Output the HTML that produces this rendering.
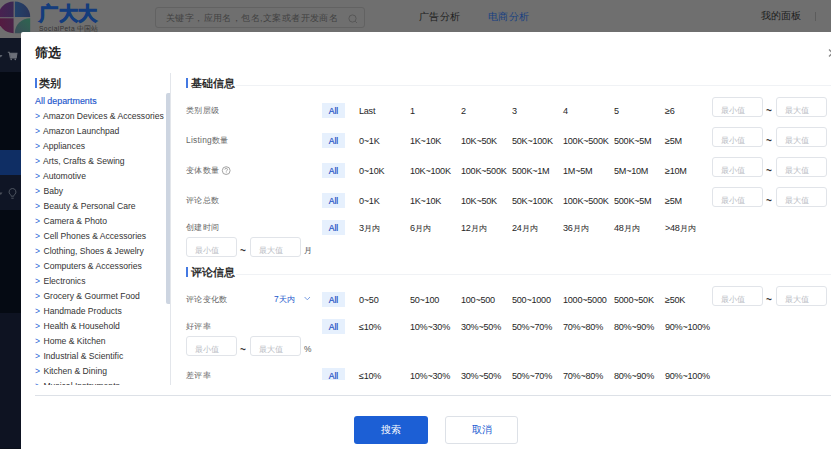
<!DOCTYPE html>
<html><head><meta charset="utf-8"><style>
*{margin:0;padding:0;box-sizing:border-box}
html,body{width:831px;height:450px;overflow:hidden;background:#fff;font-family:"Liberation Sans",sans-serif}
.a{position:absolute;white-space:nowrap}
#hdr{position:absolute;left:0;top:0;width:831px;height:38px;background:#6f6f6f}
#side{position:absolute;left:0;top:38px;width:21px;height:411px;background:#0b101b}
#modal{position:absolute;left:21px;top:32px;width:820px;height:417px;background:#fff;border-radius:2px}
.lbl{position:absolute;white-space:nowrap;font-size:8.4px;letter-spacing:0.25px;color:#666;line-height:10px}
.opt{position:absolute;white-space:nowrap;font-size:9.1px;letter-spacing:-0.25px;color:#262626;line-height:10px}
.chip{position:absolute;width:23px;height:15px;background:#e6f0fd;color:#1d4fc4;font-size:8.6px;text-align:center;line-height:16px;-webkit-text-stroke:0.2px #1d4fc4}
.inp{position:absolute;width:51px;height:20px;border:1px solid #e1e4e9;border-radius:3px;font-size:7.8px;color:#b9bcc3;text-align:left;padding:8px 0 0 8px;line-height:10px}
.sec{position:absolute;white-space:nowrap;font-size:10.6px;font-weight:400;color:#1a1a1a;-webkit-text-stroke:0.35px #1a1a1a;line-height:12px}
.bar{position:absolute;width:2px;height:10px;background:#4479e2}
.li{position:absolute;left:35px;font-size:8.6px;color:#333;white-space:nowrap;line-height:10px}
.li b{color:#2a64d6;font-weight:normal;margin-right:1px}
.hl{position:absolute;height:1px;background:#f0f2f5}
</style></head><body>
<div id="hdr"></div>
<svg class="a" style="left:0;top:0" width="32" height="34" viewBox="0 0 32 34">
<defs>
<linearGradient id="g1" x1="0" y1="0" x2="1" y2="0"><stop offset="0" stop-color="#4a2150"/><stop offset="1" stop-color="#3a2852"/></linearGradient>
<linearGradient id="g2" x1="0" y1="0" x2="1" y2="0"><stop offset="0" stop-color="#22426a"/><stop offset="1" stop-color="#28345a"/></linearGradient>
<linearGradient id="g3" x1="0" y1="0" x2="1" y2="0"><stop offset="0" stop-color="#561a40"/><stop offset="1" stop-color="#4a2348"/></linearGradient>
<linearGradient id="g4" x1="0" y1="1" x2="1" y2="0"><stop offset="0" stop-color="#3a4c58"/><stop offset="1" stop-color="#2e6650"/></linearGradient>
</defs>
<path d="M13.6 1.6A15.6 15.6 0 0 0 -2 17.2H13.6Z" fill="url(#g1)"/>
<path d="M14.8 1.6A15.4 15.4 0 0 1 30.2 17.0H14.8Z" fill="url(#g2)"/>
<path d="M13.6 18.2H-2A15.6 15.6 0 0 0 13.6 33.2Z" fill="url(#g3)"/>
<path d="M30.2 18.2V33.2H14.8A15.4 15 0 0 1 30.2 18.2Z" fill="url(#g4)"/>
</svg>
<div class="a" style="left:39px;top:3px;font-size:19px;font-weight:900;color:#143c7c;-webkit-text-stroke:1px #143c7c;line-height:22px;letter-spacing:0.6px">广大大</div>
<div class="a" style="left:39px;top:25px;font-size:6.6px;color:#333;line-height:8px;letter-spacing:0.45px">SocialPeta <span style="letter-spacing:0">中国站</span></div>
<div class="a" style="left:155px;top:7px;width:210px;height:21px;border:1px solid #626262;border-radius:3px"><span style="position:absolute;left:10px;top:4px;font-size:9px;letter-spacing:0.4px;line-height:12px;color:#424242">关键字，应用名，包名,文案或者开发商名</span><svg style="position:absolute;left:192px;top:6px" width="10" height="10" viewBox="0 0 10 10"><circle cx="4.5" cy="4.5" r="3.6" fill="none" stroke="#555" stroke-width="0.9"/><path d="M7.2 7.2L9 9" stroke="#555" stroke-width="0.9"/></svg></div>
<div class="a" style="left:419px;top:10px;font-size:10px;letter-spacing:0.35px;color:#1c1c1c;line-height:13px">广告分析</div>
<div class="a" style="left:488px;top:10px;font-size:10px;letter-spacing:0.35px;color:#173f82;line-height:13px">电商分析</div>
<div class="a" style="left:761px;top:9px;font-size:10px;color:#1c1c1c;line-height:13px">我的面板</div>
<div class="a" style="left:815px;top:12px;width:1px;height:9px;background:#5c5c5c"></div>
<div id="side"></div>
<div class="a" style="left:0;top:38px;width:21px;height:34px;background:#111726"></div>
<div class="a" style="left:0;top:72px;width:21px;height:78px;background:#050a13"></div>
<div class="a" style="left:0;top:150px;width:21px;height:25px;background:#0f2e64"></div>
<div class="a" style="left:0;top:175px;width:21px;height:35px;background:#0f1525"></div>
<div class="a" style="left:0;top:210px;width:21px;height:103px;background:#050a13"></div>
<div class="a" style="left:0;top:313px;width:21px;height:135px;background:#0e1322"></div>
<svg class="a" style="left:0;top:50px" width="21" height="12" viewBox="0 0 21 12"><path d="M-1 5H2.5L0.8 7.5Z" fill="#5c616b"/><path d="M7.8 2.2H9.2L10.4 8H16.2L16.9 3.2H9.8" fill="none" stroke="#6c7079" stroke-width="1.1"/><path d="M9.9 3.2H16.9L16.2 8H10.5Z" fill="#6c7079"/><circle cx="11.2" cy="9.3" r="0.85" fill="#6c7079"/><circle cx="15.3" cy="9.3" r="0.85" fill="#6c7079"/></svg>
<svg class="a" style="left:0;top:186px" width="21" height="16" viewBox="0 0 21 16"><path d="M-1 6.5H2.5L0.8 9Z" fill="#4a4f5a"/><path d="M12.5 2.5a3.4 3.4 0 0 0-2.1 6.1c0.5 0.5 0.8 1 0.8 1.6h2.6c0-0.6 0.3-1.1 0.8-1.6A3.4 3.4 0 0 0 12.5 2.5Z" fill="none" stroke="#555b66" stroke-width="0.9"/><path d="M11.3 12.2H13.7" stroke="#555b66" stroke-width="0.9"/></svg>
<div id="modal"></div>
<div class="a" style="left:35px;top:45px;font-size:13px;font-weight:bold;color:#222;line-height:16px">筛选</div>
<div class="bar" style="left:35px;top:78px"></div>
<div class="a" style="left:39px;top:77px;font-size:10.6px;font-weight:400;color:#1a1a1a;-webkit-text-stroke:0.35px #1a1a1a;line-height:12px">类别</div>
<div class="a" style="left:35px;top:96px;font-size:8.9px;color:#1d56cc;-webkit-text-stroke:0.15px #1d56cc;line-height:10px">All departments</div>
<div style="position:absolute;left:0;top:0;width:170px;height:385px;overflow:hidden">
<div class="li" style="top:111px"><b>&gt;</b> Amazon Devices &amp; Accessories</div>
<div class="li" style="top:126px"><b>&gt;</b> Amazon Launchpad</div>
<div class="li" style="top:141px"><b>&gt;</b> Appliances</div>
<div class="li" style="top:156px"><b>&gt;</b> Arts, Crafts &amp; Sewing</div>
<div class="li" style="top:171px"><b>&gt;</b> Automotive</div>
<div class="li" style="top:186px"><b>&gt;</b> Baby</div>
<div class="li" style="top:201px"><b>&gt;</b> Beauty &amp; Personal Care</div>
<div class="li" style="top:216px"><b>&gt;</b> Camera &amp; Photo</div>
<div class="li" style="top:231px"><b>&gt;</b> Cell Phones &amp; Accessories</div>
<div class="li" style="top:246px"><b>&gt;</b> Clothing, Shoes &amp; Jewelry</div>
<div class="li" style="top:261px"><b>&gt;</b> Computers &amp; Accessories</div>
<div class="li" style="top:276px"><b>&gt;</b> Electronics</div>
<div class="li" style="top:291px"><b>&gt;</b> Grocery &amp; Gourmet Food</div>
<div class="li" style="top:306px"><b>&gt;</b> Handmade Products</div>
<div class="li" style="top:321px"><b>&gt;</b> Health &amp; Household</div>
<div class="li" style="top:336px"><b>&gt;</b> Home &amp; Kitchen</div>
<div class="li" style="top:351px"><b>&gt;</b> Industrial &amp; Scientific</div>
<div class="li" style="top:366px"><b>&gt;</b> Kitchen &amp; Dining</div>
<div class="li" style="top:381px"><b>&gt;</b> Musical Instruments</div>
</div>
<div style="position:absolute;left:170px;top:73px;width:1px;height:312px;background:#e3e6eb"></div>
<div style="position:absolute;left:166px;top:93px;width:4px;height:211px;background:#cdd5e1;border-radius:2px 0 0 2px"></div>
<div style="position:absolute;left:175px;top:60px;width:700px;height:320px;overflow:hidden">
<div class="bar" style="left:11px;top:18px"></div>
<div class="sec" style="left:16px;top:17px">基础信息</div>
<div class="hl" style="left:61px;top:25px;width:700px"></div>
<div class="lbl" style="left:11px;top:45px;">类别层级</div>
<div class="chip" style="left:147px;top:43px;">All</div>
<div class="opt" style="left:184px;top:46px;">Last</div>
<div class="opt" style="left:235px;top:46px;">1</div>
<div class="opt" style="left:286px;top:46px;">2</div>
<div class="opt" style="left:337px;top:46px;">3</div>
<div class="opt" style="left:388px;top:46px;">4</div>
<div class="opt" style="left:439px;top:46px;">5</div>
<div class="opt" style="left:490px;top:46px;">≥6</div>
<div class="inp" style="left:537px;top:37px;">最小值</div>
<div class="a" style="left:591px;top:46px;font-size:10px;font-weight:bold;color:#333;line-height:10px">~</div>
<div class="inp" style="left:601px;top:37px;">最大值</div>
<div class="lbl" style="left:11px;top:75px;">Listing数量</div>
<div class="chip" style="left:147px;top:73px;">All</div>
<div class="opt" style="left:184px;top:76px;">0~1K</div>
<div class="opt" style="left:235px;top:76px;">1K~10K</div>
<div class="opt" style="left:286px;top:76px;">10K~50K</div>
<div class="opt" style="left:337px;top:76px;">50K~100K</div>
<div class="opt" style="left:388px;top:76px;">100K~500K</div>
<div class="opt" style="left:439px;top:76px;">500K~5M</div>
<div class="opt" style="left:490px;top:76px;">≥5M</div>
<div class="inp" style="left:537px;top:67px;">最小值</div>
<div class="a" style="left:591px;top:76px;font-size:10px;font-weight:bold;color:#333;line-height:10px">~</div>
<div class="inp" style="left:601px;top:67px;">最大值</div>
<div class="lbl" style="left:11px;top:105px;">变体数量</div>
<div class="chip" style="left:147px;top:103px;">All</div>
<div class="opt" style="left:184px;top:106px;">0~10K</div>
<div class="opt" style="left:235px;top:106px;">10K~100K</div>
<div class="opt" style="left:286px;top:106px;">100K~500K</div>
<div class="opt" style="left:337px;top:106px;">500K~1M</div>
<div class="opt" style="left:388px;top:106px;">1M~5M</div>
<div class="opt" style="left:439px;top:106px;">5M~10M</div>
<div class="opt" style="left:490px;top:106px;">≥10M</div>
<div class="inp" style="left:537px;top:97px;">最小值</div>
<div class="a" style="left:591px;top:106px;font-size:10px;font-weight:bold;color:#333;line-height:10px">~</div>
<div class="inp" style="left:601px;top:97px;">最大值</div>
<div class="a" style="left:46px;top:105px;line-height:0"><svg width="11" height="11" viewBox="0 0 11 11"><circle cx="5.2" cy="5.6" r="3.9" fill="none" stroke="#8c8c8c" stroke-width="0.8"/><path d="M3.9 4.6a1.3 1.3 0 1 1 1.9 1.1c-0.4 0.25-0.6 0.45-0.6 0.9" fill="none" stroke="#8c8c8c" stroke-width="0.75"/><circle cx="5.2" cy="7.8" r="0.45" fill="#8c8c8c"/></svg></div>
<div class="lbl" style="left:11px;top:135px;">评论总数</div>
<div class="chip" style="left:147px;top:133px;">All</div>
<div class="opt" style="left:184px;top:136px;">0~1K</div>
<div class="opt" style="left:235px;top:136px;">1K~10K</div>
<div class="opt" style="left:286px;top:136px;">10K~50K</div>
<div class="opt" style="left:337px;top:136px;">50K~100K</div>
<div class="opt" style="left:388px;top:136px;">100K~500K</div>
<div class="opt" style="left:439px;top:136px;">500K~5M</div>
<div class="opt" style="left:490px;top:136px;">≥5M</div>
<div class="inp" style="left:537px;top:127px;">最小值</div>
<div class="a" style="left:591px;top:136px;font-size:10px;font-weight:bold;color:#333;line-height:10px">~</div>
<div class="inp" style="left:601px;top:127px;">最大值</div>
<div class="lbl" style="left:11px;top:162px;">创建时间</div>
<div class="chip" style="left:147px;top:160px;">All</div>
<div class="opt" style="left:184px;top:163px;">3<span style="font-size:8.4px;letter-spacing:0.25px">月内</span></div>
<div class="opt" style="left:235px;top:163px;">6<span style="font-size:8.4px;letter-spacing:0.25px">月内</span></div>
<div class="opt" style="left:286px;top:163px;">12<span style="font-size:8.4px;letter-spacing:0.25px">月内</span></div>
<div class="opt" style="left:337px;top:163px;">24<span style="font-size:8.4px;letter-spacing:0.25px">月内</span></div>
<div class="opt" style="left:388px;top:163px;">36<span style="font-size:8.4px;letter-spacing:0.25px">月内</span></div>
<div class="opt" style="left:439px;top:163px;">48<span style="font-size:8.4px;letter-spacing:0.25px">月内</span></div>
<div class="opt" style="left:490px;top:163px;">&gt;48<span style="font-size:8.4px;letter-spacing:0.25px">月内</span></div>
<div class="inp" style="left:11px;top:177px;">最小值</div>
<div class="a" style="left:65px;top:186px;font-size:10px;font-weight:bold;color:#333;line-height:10px">~</div>
<div class="inp" style="left:75px;top:177px;">最大值</div>
<div class="a" style="left:129px;top:185px;font-size:8.4px;color:#555;line-height:10px">月</div>
<div class="bar" style="left:11px;top:207px"></div>
<div class="sec" style="left:16px;top:206px">评论信息</div>
<div class="hl" style="left:61px;top:214px;width:700px"></div>
<div class="lbl" style="left:11px;top:234px;">评论变化数</div>
<div class="chip" style="left:147px;top:232px;">All</div>
<div class="opt" style="left:184px;top:235px;">0~50</div>
<div class="opt" style="left:235px;top:235px;">50~100</div>
<div class="opt" style="left:286px;top:235px;">100~500</div>
<div class="opt" style="left:337px;top:235px;">500~1000</div>
<div class="opt" style="left:388px;top:235px;">1000~5000</div>
<div class="opt" style="left:439px;top:235px;">5000~50K</div>
<div class="opt" style="left:490px;top:235px;">≥50K</div>
<div class="inp" style="left:537px;top:226px;">最小值</div>
<div class="a" style="left:591px;top:235px;font-size:10px;font-weight:bold;color:#333;line-height:10px">~</div>
<div class="inp" style="left:601px;top:226px;">最大值</div>
<div class="a" style="left:99px;top:234px;font-size:8.4px;letter-spacing:0.3px;color:#2257cc;line-height:10px">7天内</div>
<div class="a" style="left:129px;top:236px;line-height:0"><svg width="7" height="5" viewBox="0 0 7 5"><path d="M0.6 1L3.3 3.8L6 1" fill="none" stroke="#6b94e0" stroke-width="0.9"/></svg></div>
<div class="lbl" style="left:11px;top:261px;">好评率</div>
<div class="chip" style="left:147px;top:259px;">All</div>
<div class="opt" style="left:184px;top:262px;">≤10%</div>
<div class="opt" style="left:235px;top:262px;">10%~30%</div>
<div class="opt" style="left:286px;top:262px;">30%~50%</div>
<div class="opt" style="left:337px;top:262px;">50%~70%</div>
<div class="opt" style="left:388px;top:262px;">70%~80%</div>
<div class="opt" style="left:439px;top:262px;">80%~90%</div>
<div class="opt" style="left:490px;top:262px;">90%~100%</div>
<div class="inp" style="left:11px;top:276px;">最小值</div>
<div class="a" style="left:65px;top:285px;font-size:10px;font-weight:bold;color:#333;line-height:10px">~</div>
<div class="inp" style="left:75px;top:276px;">最大值</div>
<div class="a" style="left:129px;top:284px;font-size:8.4px;color:#555;line-height:10px">%</div>
<div class="lbl" style="left:11px;top:310px;">差评率</div>
<div class="chip" style="left:147px;top:308px;">All</div>
<div class="opt" style="left:184px;top:311px;">≤10%</div>
<div class="opt" style="left:235px;top:311px;">10%~30%</div>
<div class="opt" style="left:286px;top:311px;">30%~50%</div>
<div class="opt" style="left:337px;top:311px;">50%~70%</div>
<div class="opt" style="left:388px;top:311px;">70%~80%</div>
<div class="opt" style="left:439px;top:311px;">80%~90%</div>
<div class="opt" style="left:490px;top:311px;">90%~100%</div>
</div>
<svg class="a" style="left:826px;top:47px" width="5" height="12" viewBox="0 0 5 12"><path d="M3 2.5L10 9.5M10 2.5L3 9.5" stroke="#8a8a8a" stroke-width="1.3"/></svg>
<div style="position:absolute;left:35px;top:395px;width:800px;height:1px;background:#dde1e7"></div>
<div class="a" style="left:354px;top:416px;width:74px;height:28px;background:#1c5fd5;border-radius:3px;color:#fff;font-size:10px;font-weight:500;text-align:center;line-height:28px">搜索</div>
<div class="a" style="left:445px;top:416px;width:73px;height:28px;border:1px solid #dde1e7;border-radius:3px;color:#2460d2;font-size:10px;font-weight:500;text-align:center;line-height:26px">取消</div>
</body></html>
